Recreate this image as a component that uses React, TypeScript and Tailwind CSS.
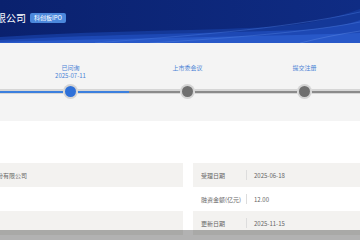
import React from "react";

const steps = [
  { label: "已受理", date: "2025-06-18", done: true, active: false },
  { label: "已问询", date: "2025-07-11", done: true, active: true },
  { label: "上市委会议", date: "", done: false, active: false },
  { label: "提交注册", date: "", done: false, active: false },
];

function Seg({ blue }: { blue: boolean }) {
  return (
    <div className="flex-1 h-[5px] bg-[#d6d6d6] flex items-center">
      <div className={blue ? "w-full h-[2px] bg-[#3b7fde]" : "w-full h-[2px] bg-[#8a8a8a]"} />
    </div>
  );
}

const rowsRight = [
  { k: "受理日期", v: "2025-06-18" },
  { k: "融资金额(亿元)", v: "12.00" },
  { k: "更新日期", v: "2025-11-15" },
];
const rowsLeft = [
  { k: "公司全称", v: "某某科技股份有限公司" },
  { k: "审核状态", v: "已问询" },
  { k: "保荐机构", v: "中信" },
];

export default function App() {
  return (
    <div className="relative w-[360px] h-[240px] overflow-hidden bg-[#f4f4f4] font-['Noto_Sans_CJK_SC',sans-serif]">
      {/* header */}
      <div className="relative h-[43px] bg-gradient-to-r from-[#0a216e] to-[#0f2c84] overflow-hidden">
        <svg className="absolute left-0 top-0" width="360" height="43" viewBox="0 0 360 43">
          <path d="M0 43 L0 37 C 90 31, 190 31, 270 27 C 315 24, 340 16, 360 9 L360 43 Z" fill="#143898" />
          <path d="M0 43 L0 40 C 110 34, 220 33, 300 30 C 330 28, 350 24, 360 20 L360 43 Z" fill="#1d48b4" />
          <path d="M0 43 L0 42 C 120 38, 250 37, 360 33 L360 43 Z" fill="#2858c8" />
          <path d="M95 43 C 180 36, 280 30, 360 12" stroke="#4a7be0" strokeWidth="0.6" fill="none" opacity="0.7" />
          <path d="M150 43 C 230 38, 310 32, 360 22" stroke="#5a88e6" strokeWidth="0.6" fill="none" opacity="0.6" />
          <path d="M300 43 C 320 38, 340 34, 360 31" stroke="#6a95ec" strokeWidth="0.6" fill="none" opacity="0.6" />
        </svg>
        <div className="relative flex items-center h-[12px] mt-[12px] ml-[-34px]">
          <span className="text-[10px] leading-[12px] text-white whitespace-nowrap">股份有限公司</span>
          <span className="ml-[4px] h-[10px] px-[4px] flex items-center rounded-[2px] bg-[#4b88dc] text-white text-[6px] leading-[10px] whitespace-nowrap">
            科创板IPO
          </span>
        </div>
      </div>

      {/* timeline */}
      <div className="pt-[21px] pb-[22px]">
        <div className="flex ml-[-105px]">
          {steps.map((s, i) => (
            <div key={i} className="w-[117px] shrink-0 flex flex-col items-center">
              <div className="h-[16px] flex flex-col items-center text-[6px] leading-[8px] text-[#4a82d4] whitespace-nowrap">
                <span>{s.label}</span>
                {s.active && <span>{s.date}</span>}
              </div>
              <div className="mt-[4px] w-full flex items-center">
                <Seg blue={s.done} />
                <div className="w-[15px] h-[15px] rounded-full bg-[#d4d4d4] flex items-center justify-center">
                  <div className={s.done ? "w-[11px] h-[11px] rounded-full bg-[#2e70d8]" : "w-[11px] h-[11px] rounded-full bg-[#6f6f6f]"} />
                </div>
                <Seg blue={s.done} />
              </div>
            </div>
          ))}
        </div>
      </div>

      {/* info */}
      <div className="bg-white pt-[42px] h-full">
        <div className="flex">
          <div className="ml-[-200px] w-[383px] shrink-0 flex flex-col">
            {rowsLeft.map((r, i) => (
              <div key={i} className={(i % 2 === 0 ? "bg-[#f3f2f0] " : "bg-white ") + "h-[24px] flex items-center text-[6px] text-[#666] whitespace-nowrap"}>
                <div className="w-[159px] pl-[8px]">{r.k}</div>
                <div className="w-px h-[10px] bg-[#dddddd]" />
                <div className="pl-[7px]">{r.v}</div>
              </div>
            ))}
          </div>
          <div className="ml-[10px] flex-1 flex flex-col">
            {rowsRight.map((r, i) => (
              <div key={i} className={(i % 2 === 0 ? "bg-[#f3f2f0] " : "bg-white ") + "h-[24px] flex items-center text-[6px] text-[#666] whitespace-nowrap"}>
                <div className="w-[53px] pl-[8px]">{r.k}</div>
                <div className="w-px h-[10px] bg-[#dddddd]" />
                <div className="pl-[7px]">{r.v}</div>
              </div>
            ))}
          </div>
        </div>
      </div>

      <div className="absolute left-0 bottom-0 w-full h-[10px] bg-black/30" />
    </div>
  );
}
